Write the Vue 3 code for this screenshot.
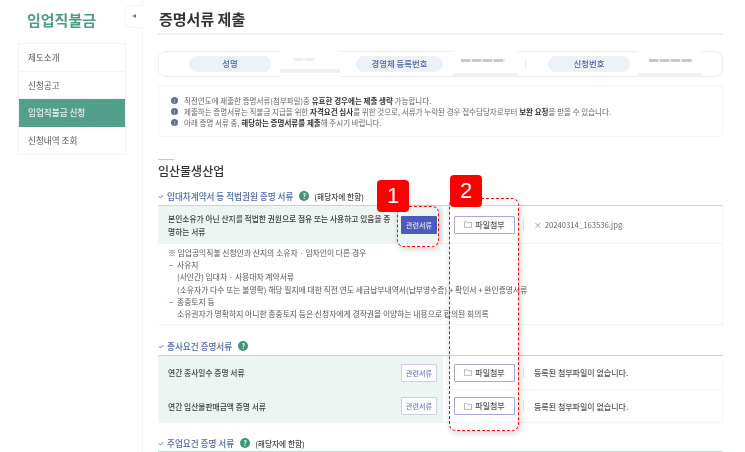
<script setup>
const notices = [
  [{ t: '직전연도에 제출한 증명서류(첨부파일)중 ' }, { t: '유효한 경우에는 제출 생략', b: true }, { t: ' 가능합니다.' }],
  [{ t: '제출하는 증명서류는 직불금 지급을 위한 ' }, { t: '자격요건 심사', b: true }, { t: '를 위한 것으로, 서류가 누락된 경우 접수담당자로부터 ' }, { t: '보완 요청', b: true }, { t: '을 받을 수 있습니다.' }],
  [{ t: '아래 증명 서류 중, ' }, { t: '해당하는 증명서류를 제출', b: true }, { t: '해 주시기 바랍니다.' }],
]
const menu = ['제도소개', '신청공고', '임업직불금 신청', '신청내역 조회']
const rows = ['연간 종사일수 증명 서류', '연간 임산물판매금액 증명 서류']
</script>

<template>
  <div class="page">
    <aside class="side">
      <h1 class="brand">임업직불금</h1>
      <ul class="menu">
        <li v-for="(m, i) in menu" :key="m" :class="{ on: i === 2 }">{{ m }}</li>
      </ul>
      <div class="toggle"><i></i></div>
    </aside>

    <main class="main">
      <h2 class="title">증명서류 제출</h2>

      <div class="who">
        <span class="pill p1">성명</span>
        <span class="mask m1"><b class="dots d1"></b><em></em></span>
        <span class="pill p2">경영체 등록번호</span>
        <span class="mask m2"><b class="dots d2"></b><em></em></span>
        <span class="sep"></span>
        <span class="pill p3">신청번호</span>
        <span class="mask m3"><b class="dots d3"></b><em></em></span>
      </div>

      <div class="notice">
        <p v-for="(n, i) in notices" :key="i">
          <span class="bullet">!</span>
          <span><template v-for="(s, j) in n" :key="j"><strong v-if="s.b">{{ s.t }}</strong><template v-else>{{ s.t }}</template></template></span>
        </p>
      </div>

      <div class="tick"></div>
      <h3 class="sec">임산물생산업</h3>

      <div class="sub">
        <svg class="chev" viewBox="0 0 8 6"><path d="M1 2.5 3.4 5 7 1" fill="none" stroke="#5b78b4" stroke-width="1.2"/></svg>
        <span class="subt">임대차계약서 등 적법권원 증명 서류</span>
        <span class="help">?</span>
        <span class="hint">(해당자에 한함)</span>
      </div>
      <div class="table">
        <div class="row tall">
          <div class="lab">
            <span class="labt">본인소유가 아닌 산지를 적법한 권원으로 점유 또는 사용하고 있음을 증명하는 서류</span>
            <button class="rel solid">관련서류</button>
          </div>
          <div class="val">
            <button class="att">
              <svg class="fold" viewBox="0 0 12 10"><path d="M.7 9.3V.8h3.6l1 1.4h6v7.1z" fill="none" stroke="#8a8a8a" stroke-width=".9"/></svg>파일첨부
            </button>
            <span class="vsep"></span>
            <span class="file"><span class="x">×</span>20240314_163536.jpg</span>
          </div>
        </div>
        <div class="note">
          <p class="n0">※ 임업공익직불 신청인과 산지의 소유자 · 임차인이 다른 경우</p>
          <p class="n1">사유지</p>
          <p class="n2">(사인간) 임대차 · 사용대차 계약서류</p>
          <p class="n2">(소유자가 다수 또는 불명확) 해당 필지에 대한 직전 연도 세금납부내역서(납부영수증) + 확인서 + 완인증명서류</p>
          <p class="n1 gap">종중토지 등</p>
          <p class="n2">소유권자가 명확하지 아니한 종중토지 등은 신청자에게 경작권을 이양하는 내용으로 합의된 회의록</p>
        </div>
      </div>

      <div class="sub s2">
        <svg class="chev" viewBox="0 0 8 6"><path d="M1 2.5 3.4 5 7 1" fill="none" stroke="#5b78b4" stroke-width="1.2"/></svg>
        <span class="subt">종사요건 증명서류</span>
        <span class="help">?</span>
      </div>
      <div class="table">
        <div v-for="r in rows" :key="r" class="row">
          <div class="lab">
            <span class="labt">{{ r }}</span>
            <button class="rel">관련서류</button>
          </div>
          <div class="val">
            <button class="att">
              <svg class="fold" viewBox="0 0 12 10"><path d="M.7 9.3V.8h3.6l1 1.4h6v7.1z" fill="none" stroke="#8a8a8a" stroke-width=".9"/></svg>파일첨부
            </button>
            <span class="vsep"></span>
            <span class="empty">등록된 첨부파일이 없습니다.</span>
          </div>
        </div>
      </div>

      <div class="sub s3">
        <svg class="chev" viewBox="0 0 8 6"><path d="M1 2.5 3.4 5 7 1" fill="none" stroke="#5b78b4" stroke-width="1.2"/></svg>
        <span class="subt">주업요건 증명 서류</span>
        <span class="help">?</span>
        <span class="hint">(해당자에 한함)</span>
      </div>
      <div class="table last"></div>
    </main>

    <div class="mark box1"></div>
    <div class="mark box2"></div>
    <div class="badge b1">1</div>
    <div class="badge b2">2</div>
  </div>
</template>

<style>
html, body { margin: 0; background: #fff; }
</style>

<style scoped>
* { box-sizing: border-box; }
.page {
  position: relative;
  display: flex;
  width: 745px;
  height: 452px;
  overflow: hidden;
  background: #fff;
  color: #333;
  font-family: "Noto Sans CJK KR", "Noto Sans", sans-serif;
  filter: blur(0.5px);
}
.side {
  position: relative;
  flex: none;
  width: 143px;
  height: 452px;
  padding: 10px 16px 0 18px;
  border-right: 1px solid #f4f4f4;
}
.brand {
  margin: 0 0 0 9px;
  height: 33px;
  font-size: 15px;
  line-height: 19px;
  font-weight: 700;
  color: #4e9c86;
}
.menu {
  list-style: none;
  margin: 0;
  padding: 0;
  width: 108px;
  border: 1px solid #f3f3f3;
}
.menu li {
  height: 27.5px;
  padding-left: 9px;
  font-size: 8.6px;
  line-height: 27px;
  color: #555;
  border-bottom: 1px solid #f5f5f5;
}
.menu li:last-child { border-bottom: 0; }
.menu li.on { background: #529f8b; color: #e6f2ee; border-bottom: 0; font-weight: 500; }
.toggle {
  position: absolute;
  top: 5px;
  left: 124px;
  width: 19px;
  height: 23px;
  background: #fff;
  border: 1px solid #f4f4f4;
  border-right: 0;
  border-radius: 8px 0 0 8px;
}
.toggle i {
  position: absolute;
  left: 7px;
  top: 8px;
  border: 2.5px solid transparent;
  border-right: 4px solid #4e8f7e;
  border-left: 0;
}
.main {
  flex: none;
  width: 565px;
  margin-left: 15px;
}
.title {
  height: 35px;
  margin: 0 0 16px;
  padding: 8px 0 0 1px;
  font-size: 15px;
  line-height: 22px;
  font-weight: 700;
  color: #333;
  border-bottom: 2px solid #f0f0f0;
}
.who {
  display: flex;
  align-items: center;
  height: 26px;
  border: 1px solid #ececec;
  border-radius: 8px;
}
.pill {
  flex: none;
  height: 16px;
  border-radius: 8px;
  background: #edf2f9;
  color: #4a64a8;
  font-size: 8.4px;
  font-weight: 500;
  line-height: 15px;
  text-align: center;
}
.p1 { width: 82px; margin-left: 30px; }
.p2 { width: 87px; margin-left: 16px; }
.p3 { width: 82px; margin-left: 22px; }
.mask {
  position: relative;
  flex: none;
  height: 26px;
  background: #fff;
}
.mask em {
  position: absolute;
  left: 0;
  right: 0;
  bottom: 0;
  height: 4px;
  background: #f0f0f0;
}
.m1 { width: 60px; margin-left: 9px; }
.m1 em { bottom: 4px; }
.m2 { width: 65px; margin-left: 10px; }
.m3 { width: 64px; margin-left: 8px; }
.dots {
  position: absolute;
  top: 8px;
  height: 3px;
  background: repeating-linear-gradient(90deg, #c8c8c8 0 9px, #ececec 9px 11px);
}
.d1 { left: 14px; width: 20px; top: 7px; opacity: .35; }
.d2 { left: 8px; width: 44px; }
.d3 { left: 11px; width: 44px; }
.sep { flex: none; width: 1px; height: 8px; margin-left: 7px; background: #e8e8e8; }
.notice {
  height: 52px;
  margin-top: 8px;
  padding: 8.5px 0 0 12px;
  border: 1px solid #f5f5f5;
  border-radius: 3px;
  font-size: 7.52px;
  line-height: 11px;
  color: #666;
}
.notice p { display: flex; align-items: center; margin: 0; white-space: nowrap; }
.notice strong { color: #333; font-weight: 700; }
.bullet {
  flex: none;
  width: 7px;
  height: 7px;
  margin-right: 6px;
  border-radius: 50%;
  background: #5f6f8e;
  color: #fff;
  font-size: 5px;
  line-height: 7px;
  text-align: center;
}
.tick { width: 16px; height: 1px; margin-top: 22px; background: #a5d6c8; }
.sec {
  margin: 3px 0 0;
  font-size: 12px;
  line-height: 16px;
  font-weight: 500;
  color: #333;
}
.sub {
  display: flex;
  align-items: center;
  height: 12px;
  margin-top: 11px;
  white-space: nowrap;
}
.s2 { margin-top: 15px; }
.s3 { margin-top: 14px; }
.chev { flex: none; width: 6px; height: 5px; margin: 0 3px 0 0; }
.subt { font-size: 8.6px; line-height: 12px; color: #4f6aa8; font-weight: 500; margin-right: 6px; }
.help {
  flex: none;
  width: 10px;
  height: 10px;
  margin-right: 5px;
  border-radius: 50%;
  background: #3f947c;
  color: #fff;
  font-size: 7px;
  line-height: 10px;
  font-weight: 700;
  text-align: center;
}
.hint { font-size: 7.7px; font-weight: 500; color: #444; }
.table {
  margin-top: 3px;
  border-top: 1px solid #bcdcd2;
  border-bottom: 1px solid #f2f2f2;
  border-right: 1px solid #f5f5f5;
}
.row {
  display: flex;
  height: 33px;
}
.row + .row .val, .row + .row .lab { border-top: 1px solid #f2f7f6; }
.row.tall { height: 38px; border-bottom: 1px solid #f2f2f2; }
.lab {
  display: flex;
  align-items: center;
  justify-content: space-between;
  flex: none;
  width: 285px;
  padding: 0 6px 0 10px;
  background: #edf5f3;
}
.labt {
  width: 228px;
  font-size: 7.75px;
  line-height: 13px;
  font-weight: 500;
  color: #3d3d3d;
}
.rel {
  flex: none;
  width: 36px;
  height: 18px;
  padding: 0;
  border: 1px solid #ccd0e6;
  border-radius: 1px;
  background: #fff;
  color: #6a78ba;
  font: 500 7px/16px "Noto Sans CJK KR", sans-serif;
}
.rel.solid { background: #4d59bb; border-color: #4d59bb; color: #e8eaf8; }
.val {
  display: flex;
  align-items: center;
  flex: 1;
  padding-left: 11px;
  background: #fff;
}
.att {
  display: flex;
  align-items: center;
  justify-content: center;
  flex: none;
  width: 61px;
  height: 18px;
  padding: 0;
  border: 1px solid #a9a6dc;
  border-radius: 1px;
  background: #fff;
  color: #555;
  font: 500 8px/16px "Noto Sans CJK KR", sans-serif;
}
.fold { width: 8px; height: 7px; margin-right: 3px; }
.vsep { flex: none; width: 1px; height: 11px; margin: 0 10px 0 8px; background: #e4e4e4; }
.file { font-size: 7.7px; color: #666; }
.x { margin-right: 3px; color: #7c86a8; }
.empty { font-size: 8px; font-weight: 500; color: #555; }
.note {
  height: 80px;
  padding: 3px 0 0 10px;
  font-size: 7.8px;
  line-height: 12.2px;
  color: #555;
  white-space: nowrap;
}
.note p { margin: 0; }
.n1 { position: relative; padding-left: 9px; }
.n1::before { content: "–"; position: absolute; left: 1px; color: #5b78b4; font-weight: 700; }
.n2 { padding-left: 9px; }
.gap { margin-top: 1.5px; }
.last { border-bottom: 0; border-right: 0; height: 1px; margin-top: 2px; }

.mark {
  position: absolute;
  border: 1.5px dashed #f00;
  border-radius: 7px;
  box-shadow: 1px 2px 6px rgba(0, 0, 0, .18);
  pointer-events: none;
}
.box1 { left: 397px; top: 206px; width: 42px; height: 41px; }
.box2 { left: 449px; top: 198px; width: 70px; height: 233px; }
.badge {
  position: absolute;
  width: 32px;
  height: 32px;
  border-radius: 4px;
  background: #f00;
  color: #fff;
  font-family: "Liberation Sans", sans-serif;
  font-size: 22px;
  line-height: 32px;
  text-align: center;
}
.b1 { left: 377px; top: 180px; }
.b2 { left: 450px; top: 175px; }
</style>
